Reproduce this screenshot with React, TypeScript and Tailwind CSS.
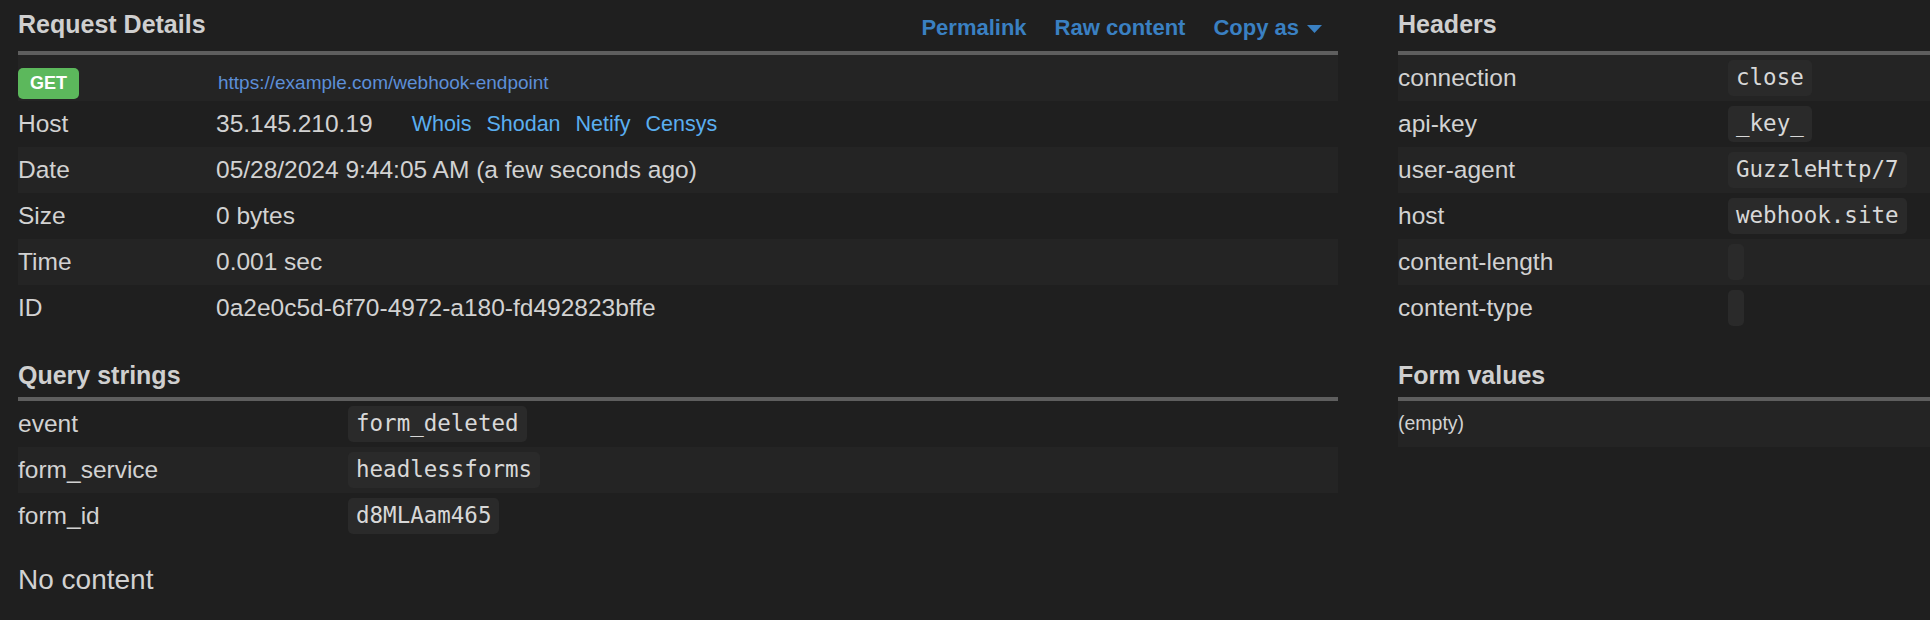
import React from 'react';

type KV = { label: string; value?: string };

const requestRows: KV[] = [
    { label: 'Date', value: '05/28/2024 9:44:05 AM (a few seconds ago)' },
    { label: 'Size', value: '0 bytes' },
    { label: 'Time', value: '0.001 sec' },
    { label: 'ID', value: '0a2e0c5d-6f70-4972-a180-fd492823bffe' },
];

const queryRows: KV[] = [
    { label: 'event', value: 'form_deleted' },
    { label: 'form_service', value: 'headlessforms' },
    { label: 'form_id', value: 'd8MLAam465' },
];

const headerRows: KV[] = [
    { label: 'connection', value: 'close' },
    { label: 'api-key', value: '_key_' },
    { label: 'user-agent', value: 'GuzzleHttp/7' },
    { label: 'host', value: 'webhook.site' },
    { label: 'content-length', value: '' },
    { label: 'content-type', value: '' },
];

const hostLinks = ['Whois', 'Shodan', 'Netify', 'Censys'];

const Row = ({ stripe, children }: { stripe: boolean; children: React.ReactNode }) => (
    <div className={`flex h-[46px] items-center ${stripe ? 'bg-[#242424]' : ''}`}>{children}</div>
);

const Code = ({ children }: { children?: string }) => (
    <code className="inline-flex h-[36px] min-w-[16px] items-center rounded-[5px] bg-[#2a2a2a] px-[8px] font-['DejaVu_Sans_Mono','Liberation_Mono',monospace] text-[22.5px] text-[#d8d8d8]">
        {children}
    </code>
);

const SectionTitle = ({ title, top, children }: { title: string; top?: boolean; children?: React.ReactNode }) => (
    <div className={`flex justify-between border-b-4 border-[#5e5e5e] ${top ? 'h-[55px]' : 'mt-[20px] h-[50px]'}`}>
        <h2 className="pt-[12px] text-[25px] font-bold leading-[25px] text-[#cfcfcf]">{title}</h2>
        {children}
    </div>
);

const App: React.FC = () => {
    return (
        <div className="h-[620px] w-[1930px] overflow-hidden bg-[#1f1f1f] font-['Liberation_Sans',Arial,sans-serif] text-[24.5px] text-[#d2d2d2]">
            <div className="flex pl-[18px]">
                {/* left column */}
                <div className="w-[1320px] shrink-0">
                    <SectionTitle title="Request Details" top>
                        <div className="flex h-[39px] items-center gap-[28px] pr-[16px] pt-[17px] text-[22px] font-bold leading-[22px] text-[#3a80c2]">
                            <span>Permalink</span>
                            <span>Raw content</span>
                            <span className="flex items-center gap-[8px]">
                                Copy as
                                <svg width="15" height="8" viewBox="0 0 15 8" className="mt-[2px]">
                                    <path d="M0 0H15L7.5 8Z" fill="#3a80c2" />
                                </svg>
                            </span>
                        </div>
                    </SectionTitle>

                    <div className="flex h-[46px] items-center bg-[#242424] pt-[7px]">
                        <div className="w-[198px]">
                            <span className="inline-flex h-[31px] w-[61px] items-center justify-center rounded-[5px] bg-[#5cb85c] text-[18px] font-bold text-white">
                                GET
                            </span>
                        </div>
                        <span className="pl-[2px] pt-[3px] text-[19px] text-[#5d8fd8]">https://example.com/webhook-endpoint</span>
                    </div>
                    <Row stripe={false}>
                        <div className="w-[198px]">Host</div>
                        <span>35.145.210.19</span>
                        <div className="ml-[39px] flex gap-[15px] text-[21.5px] text-[#5aaef0]">
                            {hostLinks.map(l => (
                                <span key={l}>{l}</span>
                            ))}
                        </div>
                    </Row>
                    {requestRows.map((r, i) => (
                        <Row key={r.label} stripe={i % 2 === 0}>
                            <div className="w-[198px]">{r.label}</div>
                            <span>{r.value}</span>
                        </Row>
                    ))}

                    <SectionTitle title="Query strings" />
                    {queryRows.map((r, i) => (
                        <Row key={r.label} stripe={i % 2 === 1}>
                            <div className="w-[330px]">{r.label}</div>
                            <Code>{r.value}</Code>
                        </Row>
                    ))}

                    <p className="mt-[27px] text-[28px] leading-[28px]">No content</p>
                </div>

                {/* right column */}
                <div className="ml-[60px] w-[640px] shrink-0">
                    <SectionTitle title="Headers" top />
                    {headerRows.map((r, i) => (
                        <Row key={r.label} stripe={i % 2 === 0}>
                            <div className="w-[330px]">{r.label}</div>
                            <Code>{r.value}</Code>
                        </Row>
                    ))}

                    <SectionTitle title="Form values" />
                    <Row stripe>
                        <span className="text-[19.5px]">(empty)</span>
                    </Row>
                </div>
            </div>
        </div>
    );
};

export default App;
